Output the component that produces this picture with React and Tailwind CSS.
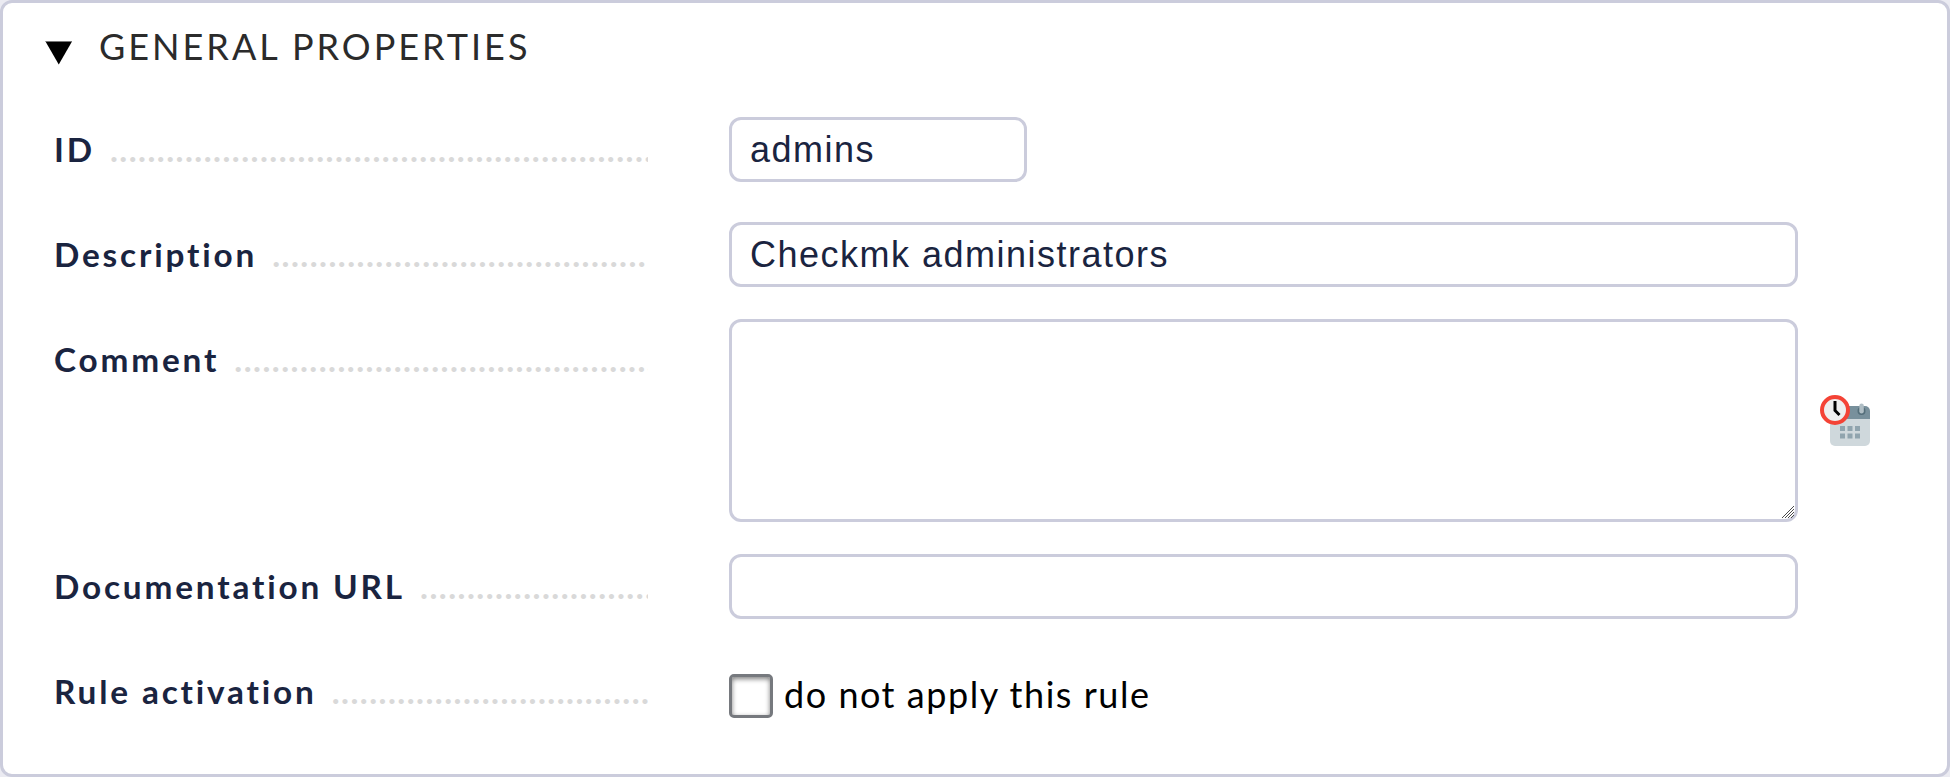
const FIELD =
  "block h-[65px] rounded-[12px] border-[3px] border-[#cbccdc] bg-white px-[18px] font-['Liberation_Sans',sans-serif] text-[36px] tracking-[1.5px] text-[#1a2440] outline-none";

function Label({ children, dots }) {
  return (
    <div className="flex h-[44px] w-[594px] overflow-hidden whitespace-nowrap text-[33.33px] leading-[44px] font-bold tracking-[2.83px] text-[#1a2440]">
      <span className="shrink-0">{children}</span>
      <span className="ml-[15px] min-w-0 flex-1 overflow-hidden tracking-[1.46px] text-[#d9d9d9]" aria-hidden="true">
        {".".repeat(dots)}
      </span>
    </div>
  );
}

function CalendarClockIcon() {
  return (
    <svg className="size-[51px] shrink-0" viewBox="0 0 51 51" fill="none">
      <path d="M10 24h40v22a5 5 0 0 1-5 5H15a5 5 0 0 1-5-5z" fill="#cfd8dc" />
      <path d="M10 24V16a5 5 0 0 1 5-5h30a5 5 0 0 1 5 5v8z" fill="#78909c" />
      <path d="M20 31h5v5h-5zm7.500 0h5v5h-5zm7.500 0h5v5h-5zM20 38.500h5v5h-5zm7.500 0h5v5h-5zm7.500 0h5v5h-5z" fill="#90a4ae" />
      <circle cx="41.500" cy="16" r="4" fill="#546e7a" />
      <rect x="39.300" y="8.500" width="4.500" height="10" rx="2.250" fill="#b0bec5" />
      <circle cx="15" cy="15" r="13" fill="#eee" stroke="#f44336" strokeWidth="4" />
      <path d="M15 6v9.500l4.500 4.500" stroke="#000" strokeWidth="3" />
    </svg>
  );
}

function ResizeGrip() {
  return (
    <svg className="absolute right-[4px] bottom-[4px] size-[12px]" viewBox="0 0 12 12" fill="none">
      <path d="M0 12L12 0M3 12L12 3M6 12L12 6M9 12L12 9" stroke="#4b4b4b" strokeWidth="1" />
    </svg>
  );
}

export default function App() {
  return (
    <div className="h-[777px] w-[1950px] bg-[#ebebf2] font-[Lato,sans-serif]">
      <section className="flex h-[777px] flex-col rounded-[12px] border-[3px] border-[#cbccdc] bg-white">
        <header className="flex h-[84px] items-start pl-[42px]">
          <svg className="mt-[38px] h-[24px] w-[28px]" viewBox="0 0 28 24">
            <path d="M0.500 0.500h26.500l-13.250 23z" fill="#000" />
            <path d="M0.500 0.500h26.500" stroke="#777" />
          </svg>
          <h1 className="mt-[21px] ml-[26px] text-[36px] leading-[44px] tracking-[3px] text-[#2b2b2b]">GENERAL PROPERTIES</h1>
        </header>
        <div className="grid grid-cols-[726px_1fr] pt-[30px]">
          <div className="h-[105px] pt-[10px] pl-[51px]"><Label dots={58}>ID</Label></div>
          <div className="h-[105px]"><input className={`${FIELD} w-[298px]`} defaultValue="admins" /></div>

          <div className="h-[97px] pt-[10px] pl-[51px]"><Label dots={40}>Description</Label></div>
          <div className="h-[97px]"><input className={`${FIELD} w-[1069px]`} defaultValue="Checkmk administrators" /></div>

          <div className="h-[235px] pt-[18px] pl-[51px]"><Label dots={45}>Comment</Label></div>
          <div className="flex h-[203px] items-center gap-[22px]">
            <div className="relative h-[203px] w-[1069px]">
              <textarea className="block size-full resize-none rounded-[12px] border-[3px] border-[#cbccdc] bg-white outline-none" />
              <ResizeGrip />
            </div>
            <CalendarClockIcon />
          </div>

          <div className="h-[105px] pt-[10px] pl-[51px]"><Label dots={25}>Documentation URL</Label></div>
          <div className="h-[105px]"><input className={`${FIELD} w-[1069px]`} /></div>

          <div className="pt-[10px] pl-[51px]"><Label dots={34}>Rule activation</Label></div>
          <label className="mt-[15px] flex h-[44px] items-start">
            <input type="checkbox" className="size-[44px] shrink-0 appearance-none rounded-[5px] border-[3px] border-[#76797e] bg-white shadow-[inset_0_2px_5px_rgba(0,0,0,0.5)]" />
            <span className="-mt-[2px] ml-[11px] text-[36px] leading-[44px] tracking-[1.53px] text-black">do not apply this rule</span>
          </label>
        </div>
      </section>
    </div>
  );
}
